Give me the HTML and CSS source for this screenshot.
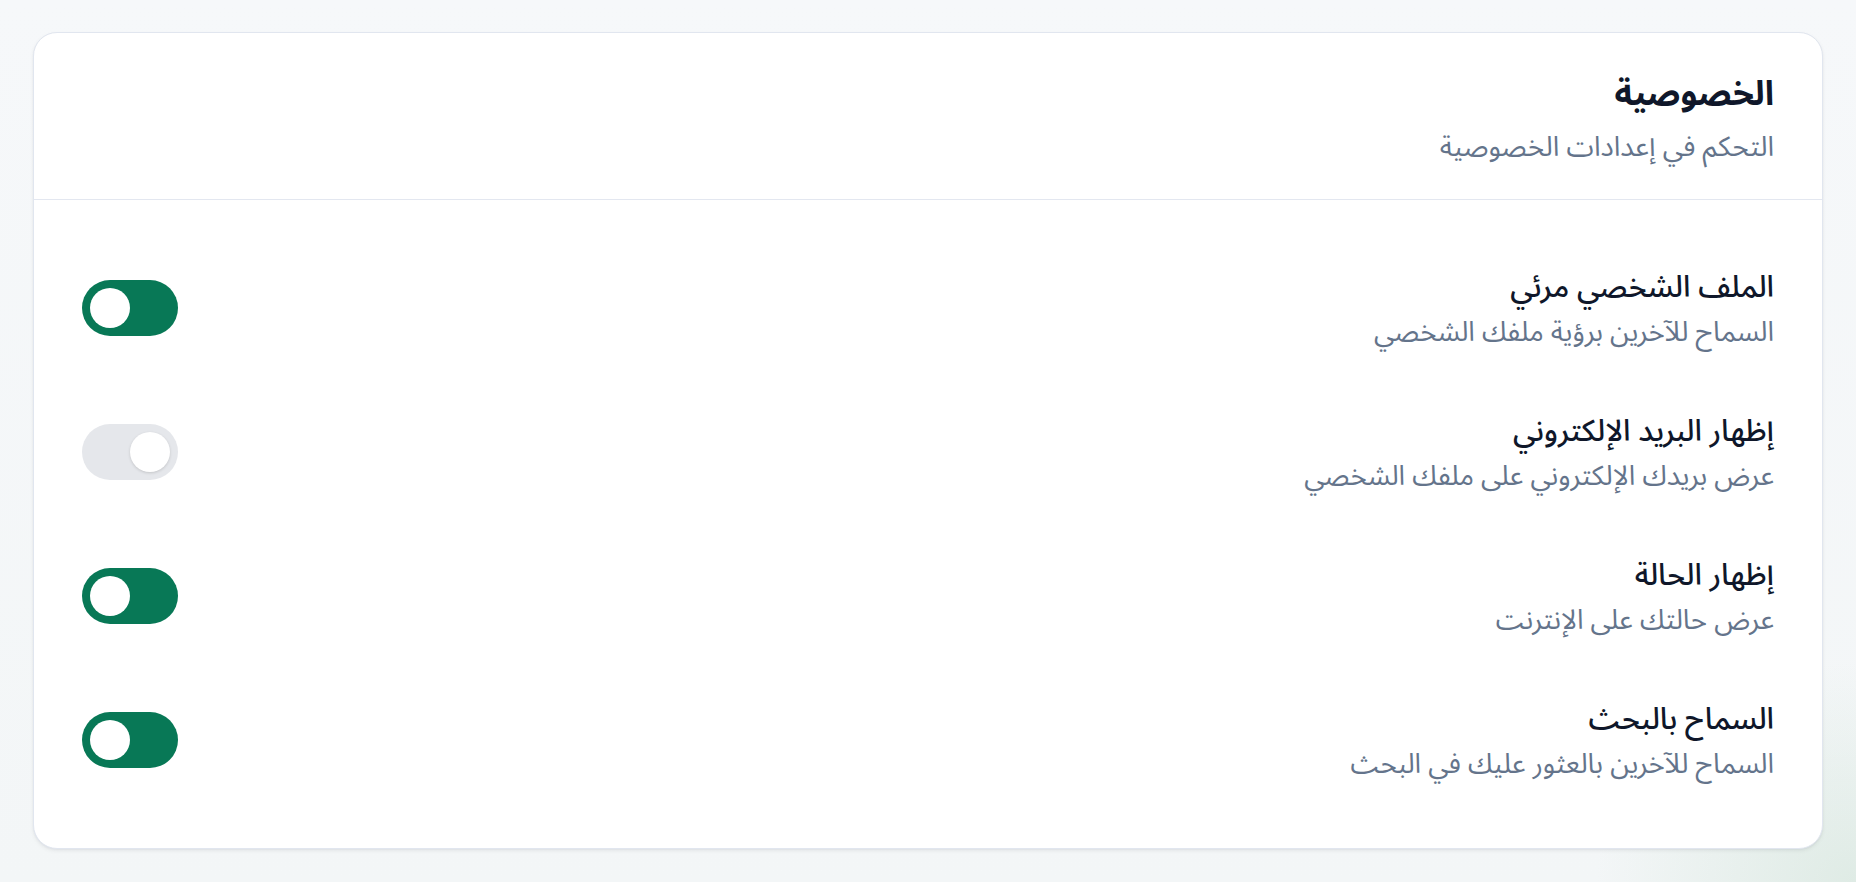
FILE: index.html
```html
<!DOCTYPE html>
<html lang="ar" dir="rtl">
<head>
<meta charset="utf-8">
<title>الخصوصية</title>
<link rel="stylesheet" href="styles.css">
</head>
<body>
<main class="page">
  <section class="card">
    <header class="card-header">
      <h2 class="card-title">الخصوصية</h2>
      <p class="card-subtitle">التحكم في إعدادات الخصوصية</p>
    </header>
    <div class="card-body">
      <div class="setting">
        <div class="setting-text">
          <div class="setting-title">الملف الشخصي مرئي</div>
          <div class="setting-desc">السماح للآخرين برؤية ملفك الشخصي</div>
        </div>
        <button class="switch is-on" aria-pressed="true"><span class="knob"></span></button>
      </div>
      <div class="setting">
        <div class="setting-text">
          <div class="setting-title">إظهار البريد الإلكتروني</div>
          <div class="setting-desc">عرض بريدك الإلكتروني على ملفك الشخصي</div>
        </div>
        <button class="switch" aria-pressed="false"><span class="knob"></span></button>
      </div>
      <div class="setting">
        <div class="setting-text">
          <div class="setting-title">إظهار الحالة</div>
          <div class="setting-desc">عرض حالتك على الإنترنت</div>
        </div>
        <button class="switch is-on" aria-pressed="true"><span class="knob"></span></button>
      </div>
      <div class="setting">
        <div class="setting-text">
          <div class="setting-title">السماح بالبحث</div>
          <div class="setting-desc">السماح للآخرين بالعثور عليك في البحث</div>
        </div>
        <button class="switch is-on" aria-pressed="true"><span class="knob"></span></button>
      </div>
    </div>
  </section>
</main>
</body>
</html>
```
FILE: styles.css
```css
* { box-sizing: border-box; }
html, body { margin: 0; padding: 0; }
body {
  font-family: "Noto Sans Arabic", "DejaVu Sans", "Noto Sans", sans-serif;
  background-color: #f5f7f9;
  background-image:
    radial-gradient(ellipse 260px 220px at 100% 100%, rgba(206, 226, 214, 0.55), rgba(206, 226, 214, 0) 100%),
    linear-gradient(180deg, #f6f8fa 0%, #f3f6f7 100%);
  min-height: 882px;
  color: #0f172a;
}
.page {
  padding: 32px 33px 34px 33px;
}
.card {
  background: #ffffff;
  border: 1.5px solid #e1e6ef;
  border-radius: 24px;
  box-shadow: 0 2px 4px rgba(15, 23, 42, 0.06), 0 1px 2px rgba(15, 23, 42, 0.04);
  overflow: hidden;
}
.card-header {
  padding: 41px 48px 35px;
  border-bottom: 1.5px solid #e3e7f0;
}
.card-title {
  margin: 0;
  font-size: 34px;
  line-height: 40px;
  font-weight: 700;
  color: #0f172a;
}
.card-subtitle {
  margin: 16px 0 0;
  font-size: 27.7px;
  line-height: 34px;
  color: #64748b;
}
.card-body {
  padding: 45px 48px 44px;
  display: flex;
  flex-direction: column;
  gap: 17px;
}
.setting {
  display: flex;
  justify-content: space-between;
  align-items: flex-start;
  padding: 24px 0;
}
.setting-text {
  display: flex;
  flex-direction: column;
  gap: 9px;
}
.setting-title {
  font-size: 30px;
  line-height: 38px;
  font-weight: 500;
  color: #0f172a;
}
.setting-desc {
  font-size: 27.5px;
  line-height: 32px;
  color: #64748b;
}
.switch {
  position: relative;
  width: 96px;
  height: 56px;
  margin-top: 11px;
  padding: 0;
  border: none;
  border-radius: 28px;
  background: #e5e7eb;
  cursor: pointer;
  flex: none;
}
.switch.is-on {
  background: #087856;
}
.knob {
  position: absolute;
  top: 8px;
  left: 48px;
  width: 40px;
  height: 40px;
  border-radius: 50%;
  background: #ffffff;
  box-shadow: 0 1px 3px rgba(0, 0, 0, 0.15);
}
.switch.is-on .knob {
  left: 8px;
  box-shadow: none;
}
```
